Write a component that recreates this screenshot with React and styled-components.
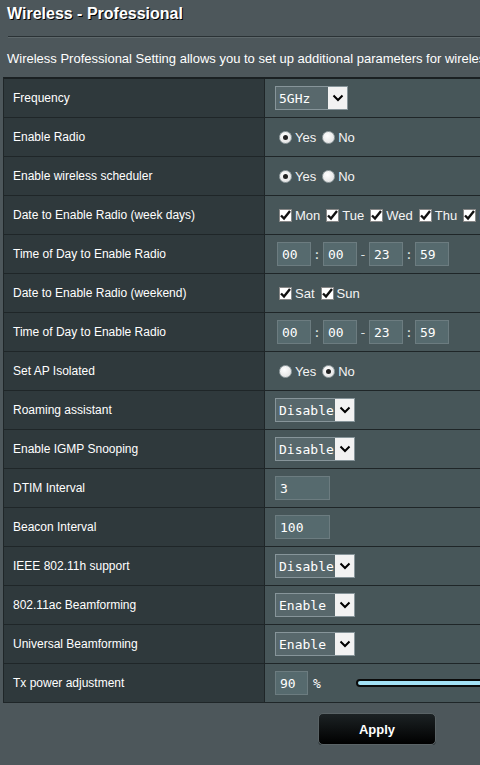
import React from "react";
import styled, { createGlobalStyle } from "styled-components";

const GlobalStyle = createGlobalStyle`
  html, body {
    margin: 0;
    padding: 0;
    background: #4d575b;
    overflow: hidden;
  }
  body {
    font-family: "Liberation Sans", Arial, sans-serif;
  }
`;

const rows = [
  { label: "Frequency", type: "select", value: "5GHz", width: 73 },
  { label: "Enable Radio", type: "radio", checked: "yes" },
  { label: "Enable wireless scheduler", type: "radio", checked: "yes" },
  { label: "Date to Enable Radio (week days)", type: "days", days: ["Mon", "Tue", "Wed", "Thu", "Fri"] },
  { label: "Time of Day to Enable Radio", type: "time" },
  { label: "Date to Enable Radio (weekend)", type: "days", days: ["Sat", "Sun"] },
  { label: "Time of Day to Enable Radio", type: "time" },
  { label: "Set AP Isolated", type: "radio", checked: "no" },
  { label: "Roaming assistant", type: "select", value: "Disable", width: 80 },
  { label: "Enable IGMP Snooping", type: "select", value: "Disable", width: 80 },
  { label: "DTIM Interval", type: "text", value: "3" },
  { label: "Beacon Interval", type: "text", value: "100" },
  { label: "IEEE 802.11h support", type: "select", value: "Disable", width: 80 },
  { label: "802.11ac Beamforming", type: "select", value: "Enable", width: 80 },
  { label: "Universal Beamforming", type: "select", value: "Enable", width: 80 },
  { label: "Tx power adjustment", type: "power", value: "90" },
];

export default function App() {
  return (
    <>
      <GlobalStyle />
      <Page>
        <Title>Wireless - Professional</Title>
        <Divider />
        <Description>
          Wireless Professional Setting allows you to set up additional parameters for wireless connection.
        </Description>
        <Table>
          {rows.map((row, i) => (
            <Row key={i}>
              <Label>{row.label}</Label>
              <Field>{renderField(row)}</Field>
            </Row>
          ))}
        </Table>
        <ButtonRow>
          <ApplyButton>Apply</ApplyButton>
        </ButtonRow>
      </Page>
    </>
  );
}

function renderField(row) {
  if (row.type === "select") {
    return <Select width={row.width} value={row.value} />;
  }
  if (row.type === "radio") {
    return (
      <>
        <Choice>
          <Radio checked={row.checked === "yes"} />
          Yes
        </Choice>
        <Choice>
          <Radio checked={row.checked === "no"} />
          No
        </Choice>
      </>
    );
  }
  if (row.type === "days") {
    return row.days.map((d) => (
      <Choice key={d}>
        <CheckBox />
        {d}
      </Choice>
    ));
  }
  if (row.type === "time") {
    return (
      <TimeGroup>
        <TextBox $w={34}>00</TextBox>
        <Sep>:</Sep>
        <TextBox $w={34}>00</TextBox>
        <Sep>-</Sep>
        <TextBox $w={34}>23</TextBox>
        <Sep>:</Sep>
        <TextBox $w={34}>59</TextBox>
      </TimeGroup>
    );
  }
  if (row.type === "text") {
    return <TextBox $w={55}>{row.value}</TextBox>;
  }
  if (row.type === "power") {
    return (
      <>
        <TextBox $w={33}>{row.value}</TextBox>
        <Percent>%</Percent>
        <Slider />
      </>
    );
  }
  return null;
}

function Select({ width, value }) {
  return (
    <SelectBox style={{ width }}>
      <SelectValue>{value}</SelectValue>
      <SelectArrow>
        <svg width="12" height="8" viewBox="0 0 12 8">
          <path d="M1.5 1.5 L6 6 L10.5 1.5" fill="none" stroke="#000" strokeWidth="2" />
        </svg>
      </SelectArrow>
    </SelectBox>
  );
}

function Radio({ checked }) {
  return <RadioDot $checked={checked} />;
}

function CheckBox() {
  return (
    <Box>
      <svg width="13" height="13" viewBox="0 0 13 13">
        <path d="M2 6.5 L5 9.5 L11 2" fill="none" stroke="#111" strokeWidth="2.4" />
      </svg>
    </Box>
  );
}

const Page = styled.div`
  width: 760px;
  padding: 0 3px;
`;

const Title = styled.div`
  padding: 5px 0 0 4px;
  height: 24px;
  font-size: 16px;
  font-weight: bold;
  color: #ffffff;
  text-shadow: 1px 1px 0 #000;
`;

const Divider = styled.div`
  margin: 7px 0 0 5px;
  height: 1px;
  background: #2a3235;
  border-bottom: 1px solid #5e686b;
`;

const Description = styled.div`
  padding: 13px 0 0 4px;
  height: 26px;
  font-size: 13px;
  color: #ffffff;
  white-space: nowrap;
`;

const Table = styled.div`
  border: 1px solid #1f2628;
  border-top: 2px solid #1a2022;
`;

const Row = styled.div`
  display: grid;
  grid-template-columns: 261px 1fr;
  height: 38px;
  border-bottom: 1px solid #1f2628;
  &:last-child {
    border-bottom: none;
  }
`;

const Label = styled.div`
  display: flex;
  align-items: center;
  padding-left: 9px;
  background: #2f393c;
  border-right: 1px solid #1f2628;
  font-size: 12px;
  color: #ffffff;
`;

const Field = styled.div`
  display: flex;
  align-items: center;
  padding-left: 10px;
  background: #475659;
  font-size: 13px;
  color: #f4f4f4;
`;

const SelectBox = styled.div`
  display: flex;
  height: 24px;
  box-sizing: border-box;
  border: 1px solid #87959a;
  background: #58686c;
`;

const SelectValue = styled.div`
  flex: 1;
  display: flex;
  align-items: center;
  padding-left: 3px;
  font-family: "DejaVu Sans Mono", monospace;
  font-size: 13px;
  color: #ffffff;
  overflow: hidden;
`;

const SelectArrow = styled.div`
  width: 19px;
  display: flex;
  align-items: center;
  justify-content: center;
  background: #f2f2f2;
`;

const Choice = styled.label`
  display: inline-flex;
  align-items: center;
  gap: 3px;
  margin-left: 4px;
  margin-right: 2px;
  font-size: 13px;
  color: #f4f4f4;
`;

const RadioDot = styled.span`
  width: 13px;
  height: 13px;
  border-radius: 50%;
  box-sizing: border-box;
  border: 1px solid #9aa4a7;
  background: radial-gradient(circle at 40% 35%, #ffffff, #dcdcdc);
  display: inline-flex;
  align-items: center;
  justify-content: center;
  &::after {
    content: "";
    width: 5px;
    height: 5px;
    border-radius: 50%;
    background: ${(p) => (p.$checked ? "#222" : "transparent")};
  }
`;

const Box = styled.span`
  width: 13px;
  height: 13px;
  box-sizing: border-box;
  background: #ffffff;
  border: 1px solid #888;
  display: inline-flex;
  svg {
    margin: -1px;
  }
`;

const TimeGroup = styled.div`
  display: flex;
  align-items: center;
  margin-left: 2px;
`;

const TextBox = styled.div`
  width: ${(p) => p.$w}px;
  height: 24px;
  box-sizing: border-box;
  border: 1px solid #6c7c80;
  background: #566a6e;
  display: flex;
  align-items: center;
  padding-left: 4px;
  font-family: "DejaVu Sans Mono", monospace;
  font-size: 13px;
  color: #ffffff;
`;

const Sep = styled.span`
  width: 12px;
  text-align: center;
  font-family: "DejaVu Sans Mono", monospace;
  font-size: 13px;
  color: #dfe3e4;
`;

const Percent = styled.span`
  margin-left: 5px;
  font-family: "DejaVu Sans Mono", monospace;
  font-size: 13px;
  color: #ffffff;
`;

const Slider = styled.div`
  margin-left: 35px;
  width: 200px;
  height: 8px;
  box-sizing: border-box;
  border: 2px solid #0a0a0a;
  border-radius: 5px;
  background: #a3e2f6;
`;

const ButtonRow = styled.div`
  display: flex;
  padding: 10px 0 0 315px;
`;

const ApplyButton = styled.button`
  width: 118px;
  height: 32px;
  border: 1px solid #5a6366;
  border-radius: 5px;
  background: linear-gradient(to bottom, #1c2224, #000000);
  box-shadow: 0 1px 0 #2a3235;
  color: #ffffff;
  font-family: "Liberation Sans", Arial, sans-serif;
  font-size: 13px;
  font-weight: bold;
`;
